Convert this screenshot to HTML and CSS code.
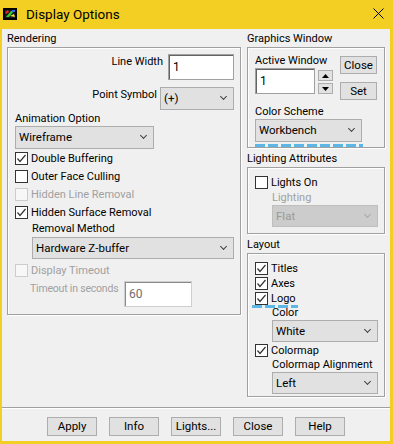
FILE: index.html
```html
<!DOCTYPE html>
<html lang="en">
<head>
    <meta charset="UTF-8">
    <meta name="viewport" content="width=device-width, initial-scale=1.0">
    <title>Display Options</title>
    <link rel="stylesheet" href="styles.css">
</head>
<body>
    <div class="dialog">
        <!-- Titelleiste -->
        <div class="titlebar">
            <svg class="app-icon" width="14" height="12" viewBox="0 0 14 12">
                <rect x="0" y="0" width="14" height="12" fill="#000"/>
                <rect x="2" y="2" width="10" height="8" fill="#1a1a1a"/>
                <polygon points="3,9 8,3 11,3 6,9" fill="#2fd12f"/>
                <polygon points="2,4 5,2 6,4 3,6" fill="#e02828"/>
                <polygon points="7,8 11,6 12,9" fill="#f5e62a"/>
                <rect x="9" y="2" width="3" height="2" fill="#2a6fe0"/>
            </svg>
            <span class="title">Display Options</span>
            <span class="close-x">
                <svg width="11" height="11" viewBox="0 0 11 11">
                    <path d="M0.5 0.5 L10.5 10.5 M10.5 0.5 L0.5 10.5" stroke="#000" stroke-width="1"/>
                </svg>
            </span>
        </div>

        <div class="main">
            <!-- Linke Spalte: Rendering -->
            <div class="col-left">
                <div class="legend">Rendering</div>
                <div class="group group-render">
                    <div class="field-row row-linewidth">
                        <span class="field-label">Line Width</span>
                        <div class="edit edit-linewidth">1</div>
                    </div>
                    <div class="field-row row-point">
                        <span class="field-label">Point Symbol</span>
                        <div class="combo combo-point">(+)</div>
                    </div>

                    <div class="sub-label anim-label">Animation Option</div>
                    <div class="combo combo-anim">Wireframe</div>

                    <div class="check">
                        <span class="box"><svg width="11" height="11" viewBox="0 0 11 11"><polyline points="1.5,5.5 4,8.5 9.5,2" fill="none" stroke="#333" stroke-width="1.2"/></svg></span>
                        Double Buffering
                    </div>
                    <div class="check">
                        <span class="box"></span>
                        Outer Face Culling
                    </div>
                    <div class="check disabled">
                        <span class="box"></span>
                        Hidden Line Removal
                    </div>
                    <div class="check">
                        <span class="box"><svg width="11" height="11" viewBox="0 0 11 11"><polyline points="1.5,5.5 4,8.5 9.5,2" fill="none" stroke="#333" stroke-width="1.2"/></svg></span>
                        Hidden Surface Removal
                    </div>

                    <div class="sub-label removal-label">Removal Method</div>
                    <div class="combo combo-removal">Hardware Z-buffer</div>

                    <div class="check disabled timeout-check">
                        <span class="box"></span>
                        Display Timeout
                    </div>
                    <div class="timeout-row">
                        <span class="timeout-label">Timeout in seconds</span>
                        <div class="edit edit-timeout disabled">60</div>
                    </div>
                </div>
            </div>

            <!-- Rechte Spalte -->
            <div class="col-right">
                <div class="legend">Graphics Window</div>
                <div class="group group-gfx">
                    <div class="gfx-top">
                        <div class="gfx-active">
                            <div class="small-label">Active Window</div>
                            <div class="edit edit-active">1</div>
                        </div>
                        <div class="spin">
                            <div class="spin-btn"><svg width="7" height="4" viewBox="0 0 7 4"><polygon points="0,4 3.5,0 7,4" fill="#000"/></svg></div>
                            <div class="spin-btn"><svg width="7" height="4" viewBox="0 0 7 4"><polygon points="0,0 7,0 3.5,4" fill="#000"/></svg></div>
                        </div>
                        <div class="gfx-buttons">
                            <div class="btn btn-small">Close</div>
                            <div class="btn btn-small">Set</div>
                        </div>
                    </div>
                    <div class="small-label scheme-label">Color Scheme</div>
                    <div class="combo combo-scheme">Workbench</div>
                    <div class="dash dash-gfx"></div>
                </div>

                <div class="legend legend-next">Lighting Attributes</div>
                <div class="group group-light">
                    <div class="check">
                        <span class="box"></span>
                        Lights On
                    </div>
                    <div class="small-label disabled indent">Lighting</div>
                    <div class="combo combo-light disabled">Flat</div>
                </div>

                <div class="legend legend-next">Layout</div>
                <div class="group group-layout">
                    <div class="check tight">
                        <span class="box"><svg width="11" height="11" viewBox="0 0 11 11"><polyline points="1.5,5.5 4,8.5 9.5,2" fill="none" stroke="#333" stroke-width="1.2"/></svg></span>
                        Titles
                    </div>
                    <div class="check tight">
                        <span class="box"><svg width="11" height="11" viewBox="0 0 11 11"><polyline points="1.5,5.5 4,8.5 9.5,2" fill="none" stroke="#333" stroke-width="1.2"/></svg></span>
                        Axes
                    </div>
                    <div class="check tight">
                        <span class="box"><svg width="11" height="11" viewBox="0 0 11 11"><polyline points="1.5,5.5 4,8.5 9.5,2" fill="none" stroke="#333" stroke-width="1.2"/></svg></span>
                        Logo
                    </div>
                    <div class="small-label indent">Color</div>
                    <div class="combo combo-layout">White</div>
                    <div class="check tight colormap-check">
                        <span class="box"><svg width="11" height="11" viewBox="0 0 11 11"><polyline points="1.5,5.5 4,8.5 9.5,2" fill="none" stroke="#333" stroke-width="1.2"/></svg></span>
                        Colormap
                    </div>
                    <div class="small-label indent">Colormap Alignment</div>
                    <div class="combo combo-layout">Left</div>
                    <div class="dash dash-logo"></div>
                </div>
            </div>
        </div>

        <div class="separator"></div>

        <!-- Knopfleiste -->
        <div class="footer">
            <div class="btn btn-footer">Apply</div>
            <div class="btn btn-footer">Info</div>
            <div class="btn btn-footer">Lights...</div>
            <div class="btn btn-footer">Close</div>
            <div class="btn btn-footer">Help</div>
        </div>
    </div>
</body>
</html>
```

FILE: styles.css
```css
/* Grundlayout */
body {
    margin: 0;
    font-family: Roboto, "Liberation Sans", sans-serif;
    font-size: 11px;
    color: #000;
}

.dialog {
    width: 393px;
    height: 444px;
    box-sizing: border-box;
    background-color: #f0f0f0;
    border-left: 2px solid #f2cf22;
    border-right: 3px solid #f2cf22;
    border-bottom: 3px solid #f2cf22;
    display: flex;
    flex-direction: column;
}

/* Titelleiste */
.titlebar {
    height: 29px;
    flex: none;
    background-color: #f2cf22;
    display: flex;
    align-items: center;
    padding: 0 0 2px 1px;
    box-sizing: border-box;
}

.app-icon {
    flex: none;
}

.title {
    margin-left: 9px;
    font-size: 13.5px;
}

.close-x {
    margin-left: auto;
    margin-right: 6px;
    display: flex;
}

/* Hauptbereich */
.main {
    height: 378px;
    flex: none;
    display: flex;
    gap: 6px;
    padding: 2px 5px 0 5px;
    box-sizing: border-box;
}

.col-left {
    width: 234px;
}

.col-right {
    width: 138px;
}

.legend {
    height: 16px;
    line-height: 16px;
}

.legend-next {
    margin-top: 3px;
}

/* Gruppenrahmen */
.group {
    position: relative;
    box-sizing: border-box;
    border: 1px solid #a0a0a0;
    box-shadow: inset 1px 1px 0 #fff, 1px 1px 0 #fff;
}

.group-render {
    height: 268px;
    padding: 6px 6px 0 7px;
}

.group-gfx {
    height: 101px;
    padding: 6px 0 0 7px;
}

.group-light {
    height: 67px;
    padding: 5px 0 0 7px;
}

.group-layout {
    height: 144px;
    padding: 7px 0 0 7px;
}

/* Zeilen mit Beschriftung rechts */
.field-row {
    display: flex;
    justify-content: flex-end;
    align-items: flex-start;
}

.field-label {
    line-height: 16px;
}

.row-linewidth .field-label {
    margin-right: 5px;
}

.row-point {
    margin-top: 7px;
}

.row-point .field-label {
    margin-right: 3px;
}

/* Eingabefelder */
.edit {
    box-sizing: border-box;
    height: 26px;
    background-color: #fff;
    border: 1px solid #a0a0a0;
    box-shadow: inset 1px 1px 0 #646464;
    padding: 0 4px;
    line-height: 24px;
    font-size: 12px;
}

.edit-linewidth {
    width: 66px;
}

.edit-active {
    width: 60px;
}

.edit-timeout {
    width: 68px;
    margin-left: 3px;
}

.edit.disabled {
    border-color: #cfcfcf;
    box-shadow: inset 1px 1px 0 #8a8a8a;
    color: #6d6d6d;
}

/* Auswahllisten */
.combo {
    position: relative;
    box-sizing: border-box;
    height: 22px;
    line-height: 20px;
    background-color: #e1e1e1;
    border: 1px solid #adadad;
    padding-left: 3px;
    font-size: 11.5px;
}

.combo::after {
    content: "";
    position: absolute;
    right: 7px;
    top: 6px;
    width: 4px;
    height: 4px;
    border-right: 1px solid #404040;
    border-bottom: 1px solid #404040;
    transform: rotate(45deg);
}

.combo.disabled {
    background-color: #cccccc;
    border-color: #bfbfbf;
    color: #9a9a9a;
}

.combo.disabled::after {
    border-color: #a8a8a8;
}

.combo-point {
    width: 74px;
    height: 23px;
    line-height: 21px;
}

.combo-anim {
    width: 139px;
    height: 23px;
    line-height: 21px;
}

.combo-removal {
    width: 202px;
    margin-left: 17px;
}

.combo-scheme {
    width: 107px;
    height: 23px;
    line-height: 21px;
}

.combo-light,
.combo-layout {
    width: 106px;
    margin-left: 17px;
}

/* Beschriftungen */
.sub-label {
    line-height: 16px;
}

.anim-label {
    margin-top: 1px;
    height: 15px;
}

.removal-label {
    margin-left: 17px;
}

.small-label {
    line-height: 14px;
    white-space: nowrap;
}

.small-label.indent {
    margin-left: 17px;
}

.disabled,
.check.disabled {
    color: #a0a0a0;
}

/* Kontrollkästchen */
.check {
    display: flex;
    align-items: center;
    height: 18px;
}

.check.tight {
    height: 15px;
}

.check .box {
    box-sizing: border-box;
    width: 13px;
    height: 13px;
    flex: none;
    border: 1px solid #333;
    background-color: #fff;
    margin-right: 3px;
    display: flex;
    align-items: center;
    justify-content: center;
}

.check.disabled .box {
    border-color: #cccccc;
    background-color: #f7f7f7;
}

.timeout-check {
    margin-top: 2px;
}

.timeout-row {
    display: flex;
    align-items: flex-start;
    margin-top: 2px;
    margin-left: 15px;
}

.timeout-label {
    width: 91px;
    white-space: nowrap;
    color: #a0a0a0;
    line-height: 14px;
    margin-top: 1px;
    font-size: 10.5px;
    letter-spacing: -0.2px;
}

.colormap-check {
    margin-top: 1px;
}

/* Graphics Window */
.gfx-top {
    display: flex;
    align-items: flex-start;
}

.gfx-active {
    width: 60px;
}

.spin {
    margin-left: 3px;
    margin-top: 16px;
    display: flex;
    flex-direction: column;
    gap: 2px;
}

.spin-btn {
    box-sizing: border-box;
    width: 15px;
    height: 11px;
    background-color: #e1e1e1;
    border: 1px solid #adadad;
    display: flex;
    align-items: center;
    justify-content: center;
}

.gfx-buttons {
    margin-left: 7px;
    margin-top: 2px;
    display: flex;
    flex-direction: column;
    gap: 8px;
}

.scheme-label {
    margin-top: 5px;
}

/* Knöpfe */
.btn {
    box-sizing: border-box;
    background-color: #e1e1e1;
    border: 1px solid #adadad;
    text-align: center;
    font-size: 11.5px;
}

.btn-small {
    width: 37px;
    height: 18px;
    line-height: 16px;
}

.btn-footer {
    width: 50px;
    height: 19px;
    line-height: 17px;
}

.separator {
    height: 1px;
    flex: none;
    background-color: #a0a0a0;
    border-bottom: 1px solid #fff;
}

.footer {
    display: flex;
    justify-content: center;
    gap: 12px;
    padding-top: 8px;
}

/* blaue Markierungen aus dem Screenshot */
.dash {
    position: absolute;
    height: 3px;
    background: repeating-linear-gradient(90deg, #5cb6e6 0 10px, #e8f4fb 10px 13px);
}

.dash-gfx {
    left: 7px;
    bottom: 0;
    width: 108px;
}

.dash-logo {
    left: 4px;
    top: 51px;
    width: 46px;
}
```
